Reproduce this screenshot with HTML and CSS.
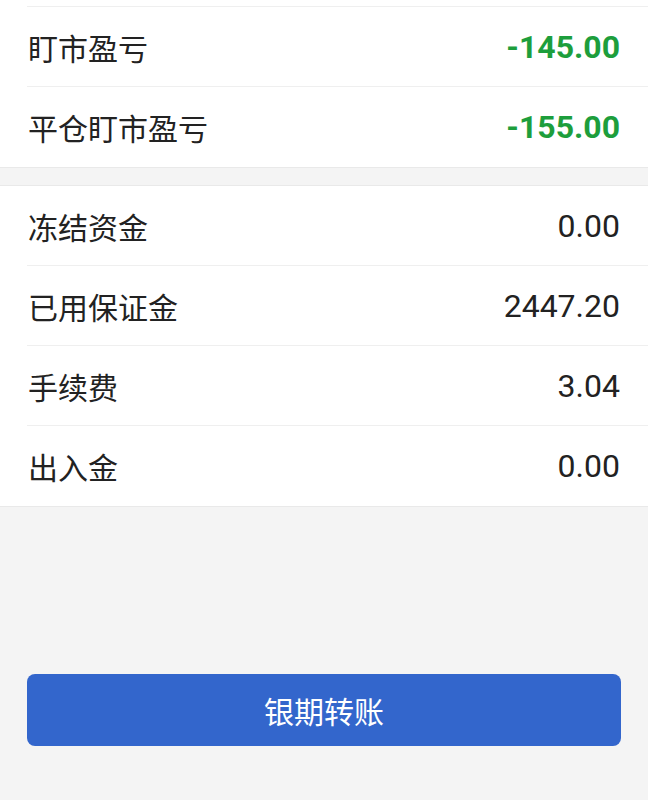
FILE: index.html
```html
<!DOCTYPE html>
<html>
<head>
    <meta charset="utf-8">
    <title>资金详情</title>
    <link rel="stylesheet" href="styles.css">
</head>
<body>
    <div class="page">
        <div class="list list-top">
            <div class="row row-cut"></div>
            <div class="row">
                <span class="label">盯市盈亏</span>
                <span class="value loss">-145.00</span>
            </div>
            <div class="row">
                <span class="label">平仓盯市盈亏</span>
                <span class="value loss">-155.00</span>
            </div>
        </div>

        <div class="list">
            <div class="row">
                <span class="label">冻结资金</span>
                <span class="value">0.00</span>
            </div>
            <div class="row">
                <span class="label">已用保证金</span>
                <span class="value">2447.20</span>
            </div>
            <div class="row">
                <span class="label">手续费</span>
                <span class="value">3.04</span>
            </div>
            <div class="row">
                <span class="label">出入金</span>
                <span class="value">0.00</span>
            </div>
        </div>

        <div class="actions">
            <button class="btn-transfer" type="button">银期转账</button>
        </div>
    </div>
</body>
</html>
```

FILE: styles.css
```css
html, body {
    margin: 0;
    padding: 0;
    background-color: #f4f4f4;
}

body {
    font-family: Roboto, "Noto Sans CJK SC", sans-serif;
    color: #222;
}

.page {
    width: 648px;
    height: 800px;
    overflow: hidden;
}

.list {
    background-color: #fff;
    border-top: 1px solid #e9e9e9;
    border-bottom: 1px solid #e9e9e9;
    margin-bottom: 17px;
}

.list-top {
    border-top: none;
}

.row {
    display: flex;
    align-items: center;
    justify-content: space-between;
    height: 79px;
    margin-left: 27px;
    padding-right: 28px;
    border-bottom: 1px solid #efefef;
}

.row:last-child {
    height: 80px;
    border-bottom: none;
}

.row-cut {
    height: 6px;
}

.label {
    font-family: "Noto Sans CJK SC", sans-serif;
    font-size: 30px;
    color: #222;
    padding-left: 1px;
}

.value {
    font-family: Roboto, sans-serif;
    font-size: 32px;
    color: #222;
}

.value.loss {
    color: #1d9e3c;
    font-weight: bold;
}

.actions {
    padding: 150px 27px 0;
}

.btn-transfer {
    display: block;
    width: 100%;
    height: 72px;
    border: none;
    border-radius: 8px;
    background-color: #3366cc;
    color: #fff;
    font-family: "Noto Sans CJK SC", sans-serif;
    font-size: 30px;
    cursor: pointer;
}
```
